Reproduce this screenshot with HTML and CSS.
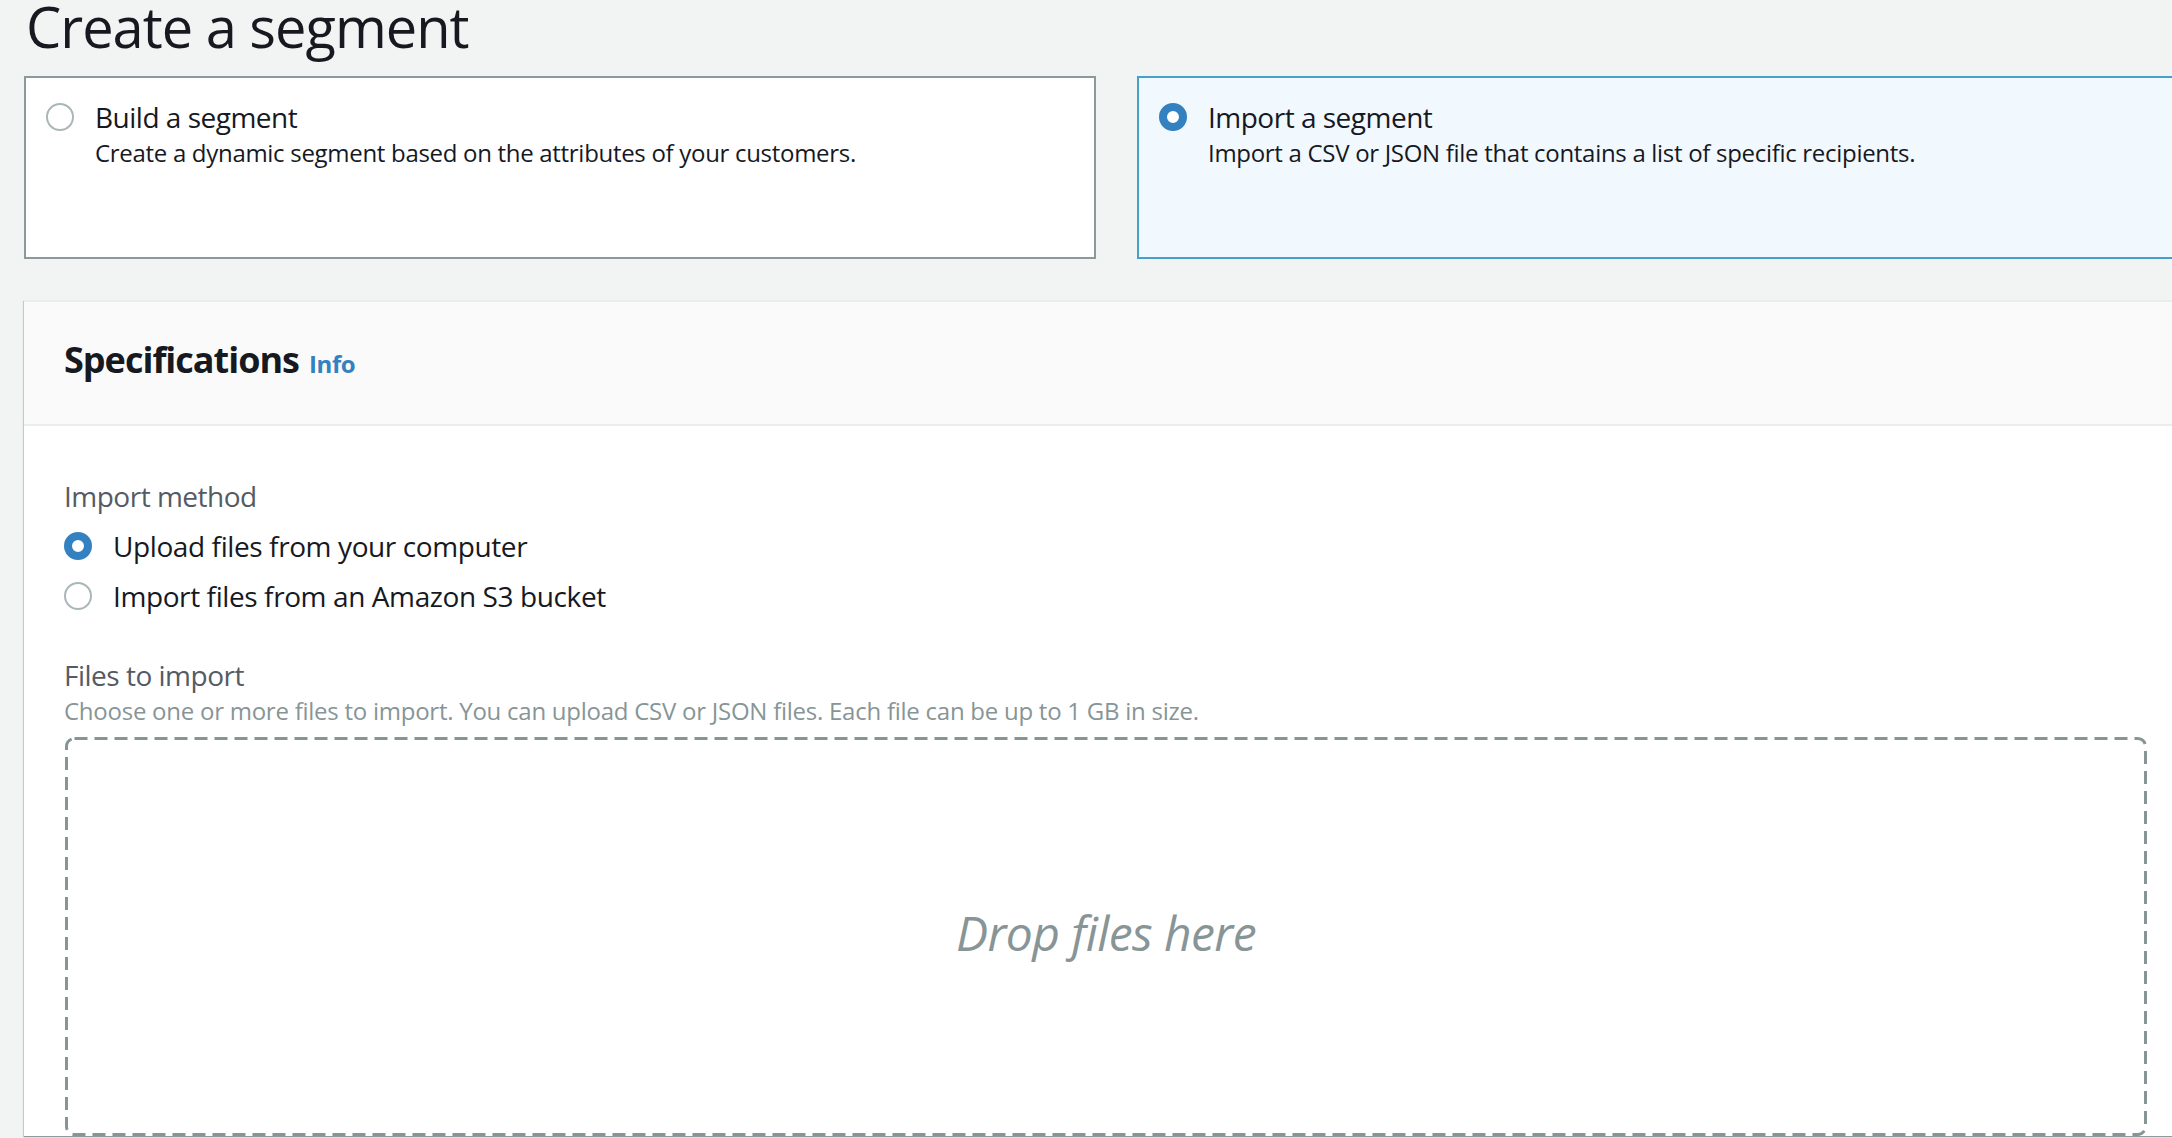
FILE: index.html
```html
<!DOCTYPE html>
<html lang="en">
<head>
<meta charset="utf-8">
<title>Create a segment</title>
<link rel="stylesheet" href="styles.css">
</head>
<body>
<div class="page">
  <h1 class="title">Create a segment</h1>

  <div class="tiles">
    <div class="tile">
      <span class="radio"></span>
      <div class="tile-text">
        <div class="tile-label">Build a segment</div>
        <div class="tile-desc">Create a dynamic segment based on the attributes of your customers.</div>
      </div>
    </div>
    <div class="tile tile-selected">
      <span class="radio radio-checked"></span>
      <div class="tile-text">
        <div class="tile-label">Import a segment</div>
        <div class="tile-desc">Import a CSV or JSON file that contains a list of specific recipients.</div>
      </div>
    </div>
  </div>

  <section class="container">
    <header class="container-header">
      <h2 class="header-title">Specifications</h2>
      <a class="info-link">Info</a>
    </header>
    <div class="container-body">
      <div class="field">
        <div class="field-label">Import method</div>
        <div class="options">
          <div class="option">
            <span class="radio radio-checked"></span>
            <span class="option-label">Upload files from your computer</span>
          </div>
          <div class="option">
            <span class="radio"></span>
            <span class="option-label">Import files from an Amazon S3 bucket</span>
          </div>
        </div>
      </div>

      <div class="field field-files">
        <div class="field-label">Files to import</div>
        <div class="field-desc">Choose one or more files to import. You can upload CSV or JSON files. Each file can be up to 1 GB in size.</div>
        <div class="dropzone">
          <svg class="dropzone-border" width="100%" height="100%" preserveAspectRatio="none">
            <rect x="1.5" y="1.5" width="calc(100% - 3px)" height="calc(100% - 3px)" rx="8" ry="8" fill="none" stroke="#879596" stroke-width="3" stroke-dasharray="13 7"/>
          </svg>
          <span class="drop-text">Drop files here</span>
        </div>
      </div>
    </div>
  </section>
</div>
</body>
</html>
```

FILE: styles.css
```css
html, body {
  margin: 0;
  padding: 0;
}

body {
  background: #f2f3f3;
  color: #16191f;
  font-family: "Open Sans", "Noto Sans", "Liberation Sans", sans-serif;
  overflow: hidden;
  width: 2172px;
  height: 1138px;
}

.page {
  width: 2209px;
  padding-left: 24px;
}

.title {
  margin: 0 0 0 2px;
  font-size: 56px;
  line-height: 52px;
  font-weight: 400;
  letter-spacing: -1px;
  color: #16191f;
}

.tiles {
  margin-top: 24px;
  display: grid;
  grid-template-columns: 1072px 1072px;
  column-gap: 41px;
}

.tile {
  box-sizing: border-box;
  height: 183px;
  border: 2px solid #8c9899;
  background: #ffffff;
  padding: 19px 20px 0 20px;
  display: flex;
  align-items: flex-start;
  gap: 21px;
}

.tile-selected {
  border-color: #44a1ca;
  background: #f1f8fe;
}

.radio {
  box-sizing: border-box;
  flex: none;
  width: 28px;
  height: 28px;
  border-radius: 50%;
  border: 2px solid #aab7b8;
  background: #ffffff;
  margin-top: 6px;
}

.radio-checked {
  border: 8px solid #3381c1;
}

.tile-label {
  font-size: 28px;
  line-height: 40px;
  letter-spacing: -0.5px;
}

.tile-desc {
  font-size: 24px;
  line-height: 32px;
  letter-spacing: -0.3px;
}

.container {
  margin-top: 41px;
  width: 2164px;
  background: #ffffff;
  border-top: 2px solid #eaeded;
  box-shadow: -1px 1px 1px 0 rgba(0, 28, 36, 0.15), 0 1px 1px 0 rgba(0, 28, 36, 0.3);
}

.container-header {
  background: #fafafa;
  border-bottom: 2px solid #eaeded;
  padding: 34px 41px 40px 40px;
  display: flex;
  align-items: baseline;
  gap: 10px;
}

.header-title {
  margin: 0;
  font-size: 36px;
  line-height: 48px;
  font-weight: 700;
  letter-spacing: -1px;
  color: #16191f;
}

.info-link {
  font-size: 24px;
  font-weight: 700;
  color: #3381c1;
  letter-spacing: -0.4px;
}

.container-body {
  padding: 50px 41px 0 41px;
}

.field-label {
  font-size: 28px;
  line-height: 40px;
  color: #545b64;
  letter-spacing: -0.5px;
  margin-left: -1px;
}

.options {
  margin-top: 10px;
  display: flex;
  flex-direction: column;
  gap: 10px;
}

.option {
  display: flex;
  align-items: flex-start;
  gap: 21px;
  margin-left: -1px;
}

.option-label {
  font-size: 28px;
  line-height: 40px;
  letter-spacing: -0.4px;
  color: #16191f;
}

.field-files {
  margin-top: 39px;
}

.field-desc {
  font-size: 24px;
  line-height: 32px;
  color: #879596;
  letter-spacing: -0.25px;
  margin-left: -1px;
}

.dropzone {
  position: relative;
  box-sizing: border-box;
  margin-top: 10px;
  height: 399px;
  display: flex;
  align-items: center;
  justify-content: center;
}

.dropzone-border {
  position: absolute;
  left: 0;
  top: 0;
  width: 100%;
  height: 100%;
}

.drop-text {
  font-size: 48px;
  font-style: italic;
  color: #879596;
  letter-spacing: -0.6px;
  margin-top: -8px;
}
```
